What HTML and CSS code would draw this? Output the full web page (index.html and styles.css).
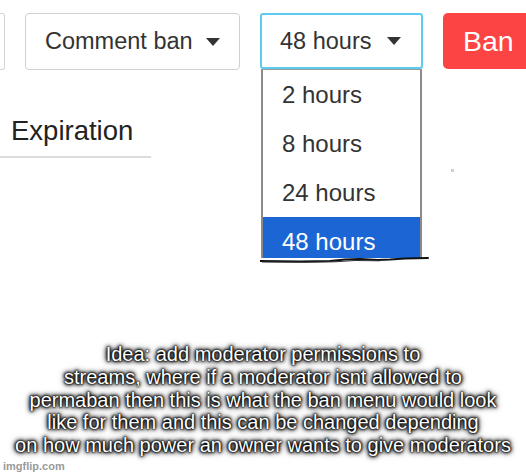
FILE: index.html
```html
<!DOCTYPE html>
<html>
<head>
<meta charset="utf-8">
<link rel="stylesheet" href="styles.css">
</head>
<body>
<div class="page">
  <div class="toolbar">
    <div class="stub"></div>
    <div class="btn comment">Comment ban <span class="caret"></span></div>
    <div class="select-wrap">
      <div class="btn select">48 hours <span class="caret"></span></div>
      <div class="dropdown">
        <div class="opt">2 hours</div>
        <div class="opt">8 hours</div>
        <div class="opt">24 hours</div>
        <div class="opt sel">48 hours</div>
        <svg class="scribble" width="170" height="8" viewBox="0 0 170 8">
          <path d="M0 5 L40 5.5 L70 5 L85 3.5 L100 3 L118 4 L130 3.5 L145 2.5 L168 2" stroke="#111" stroke-width="2" fill="none" stroke-linecap="round"/>
          <path d="M2 6 L45 6.3 L75 5.8 L95 4.5 L120 4.8" stroke="#333" stroke-width="1" fill="none"/>
        </svg>
      </div>
    </div>
    <div class="btn ban">Ban</div>
  </div>
  <div class="expiration">Expiration</div>
  <div class="dot"></div>
  <div class="caption">Idea: add moderator permissions to<br>streams, where if a moderator isnt allowed to<br>permaban then this is what the ban menu would look<br>like for them and this can be changed depending<br>on how much power an owner wants to give moderators</div>
  <div class="watermark">imgflip.com</div>
</div>
</body>
</html>
```
FILE: styles.css
```css
* { box-sizing: border-box; }
html, body { margin: 0; padding: 0; background: #fff; }
body { font-family: "Liberation Sans", Arial, sans-serif; }
.page { position: relative; width: 526px; height: 475px; overflow: hidden; }
.toolbar { display: flex; align-items: flex-start; padding-top: 13px; gap: 20px; }
.toolbar > * { flex-shrink: 0; }
.stub { width: 5px; height: 57px; border: 1px solid #d4d4d4; border-left: none; border-radius: 0 3px 3px 0; }
.btn { height: 57px; display: flex; align-items: center; font-size: 23.5px; color: #333; border-radius: 4px; }
.comment { width: 215px; border: 1px solid #d0d0d0; padding-left: 19px; }
.comment .caret { margin-left: 13px; }
.caret { width: 0; height: 0; border-left: 7px solid transparent; border-right: 7px solid transparent; border-top: 8px solid #333; display: inline-block; }
.select-wrap { position: relative; }
.select { width: 163px; border: 2px solid #5ccbf0; border-radius: 3px; padding-left: 18px; height: 56px; }
.select .caret { margin-left: 16px; }
.dropdown { position: absolute; top: 56px; left: 1px; width: 161px; border-left: 2px solid #8a8a8a; border-right: 2px solid #8a8a8a; border-top: 1px solid #9a9a9a; background: #fff; }
.opt { height: 49px; line-height: 49px; padding-left: 19px; font-size: 24px; color: #333; }
.opt.sel { background: #1b66d4; color: #fff; height: 41px; overflow: hidden; }
.scribble { position: absolute; left: -3px; bottom: -6px; }
.ban { width: 100px; background: #fd4444; color: #fff; font-size: 28.5px; padding-left: 20px; height: 56px; border-radius: 5px; }
.expiration { width: 151px; margin-top: 46px; padding-left: 11px; font-size: 27.5px; line-height: 30px; color: #222; padding-bottom: 10px; border-bottom: 2px solid #dcdcdc; }
.dot { position: absolute; left: 451px; top: 169px; width: 3px; height: 3px; background: #cfcfcf; }
.caption { margin-top: 185px; text-align: center; color: #fff; font-size: 20px; line-height: 22.75px; text-shadow: 0 0 1px #000, 0 0 2px #000, 0 0 3px #000, 0 0 4px #000, 0 0 5px #000, 0 0 7px #333; }
.watermark { margin-top: 3px; padding-left: 3px; font-size: 11px; color: #9a9a9a; font-weight: bold; }
```
